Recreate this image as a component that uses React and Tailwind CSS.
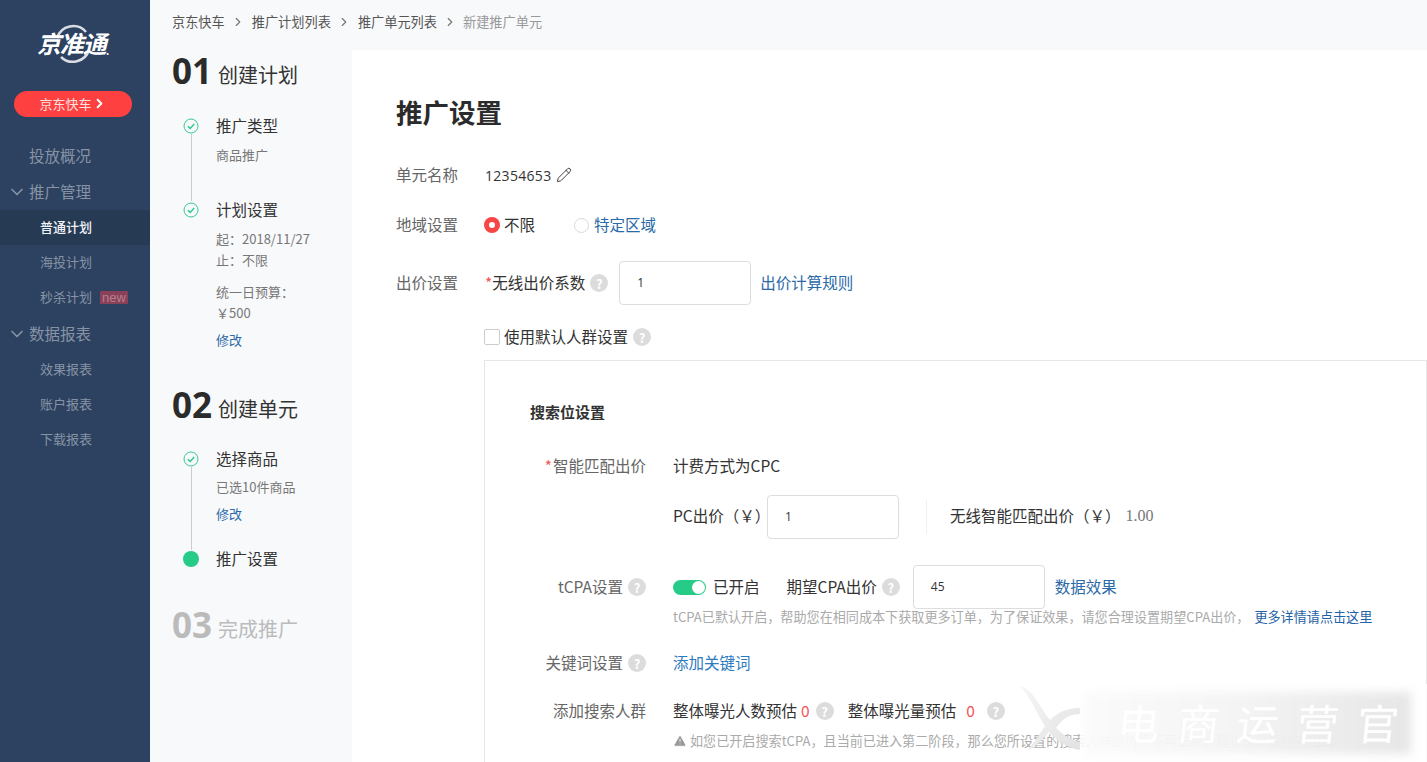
import React from "react";
import { Pencil, ChevronRight, ChevronDown, TriangleAlert } from "lucide-react";

function Help({ className = "" }) {
  return (
    <span className={`inline-flex h-[18px] w-[18px] shrink-0 items-center justify-center rounded-full bg-[#dcdcdc] text-[13px] font-bold leading-none text-white ${className}`}>
      ?
    </span>
  );
}

function CheckDot() {
  return (
    <svg width="16" height="16" viewBox="0 0 16 16" className="shrink-0 bg-[#f8f9fb]">
      <circle cx="8" cy="8" r="7" fill="none" stroke="#3bc892" strokeWidth="1" />
      <path d="M4.8 8.2 7.2 10.4 11.2 6" fill="none" stroke="#2ecb8d" strokeWidth="1.5" />
    </svg>
  );
}

function Step({ title, children, line, h, dot }) {
  return (
    <div className="flex" style={{ height: h }}>
      <div className="flex w-[38px] flex-col items-center pt-[1px]">
        {dot ? <span className="h-4 w-4 rounded-full bg-[#26cb87]" /> : <CheckDot />}
        {line && <span className="w-px flex-1 bg-[#cccccc]" />}
      </div>
      <div className="ml-[6px] -mt-[1px]">
        <div className="text-[15.5px] leading-[18px] text-[#333]">{title}</div>
        {children}
      </div>
    </div>
  );
}

function StepHead({ num, title, muted }) {
  return (
    <div className="flex h-[40px] items-center">
      <span className={`w-[46px] text-[35px] font-bold leading-none [font-family:'Open_Sans',sans-serif] ${muted ? "text-[#bbbbbb]" : "text-[#2b2b2b]"}`}>
        {num}
      </span>
      <span className={`mt-[9px] text-[20px] leading-none ${muted ? "text-[#bbbbbb]" : "text-[#333]"}`}>{title}</span>
    </div>
  );
}

function NavItem({ children, active, badge }) {
  return (
    <div className={`flex h-[35px] items-center pl-[40px] text-[13px] ${active ? "bg-[#263a54] pb-[2px] font-medium text-[#f2f4f7]" : "pb-[1px] text-[#8793a5]"}`}>
      {children}
      {badge && (
        <span className="ml-[8px] flex h-[13px] w-[28px] items-center justify-center rounded-[1px] bg-[#8a4058] text-[13px] leading-none text-[#b5808e] [font-family:'Liberation_Sans',sans-serif]">
          new
        </span>
      )}
    </div>
  );
}

function NavGroup({ children, open, className = "" }) {
  return (
    <div className={`flex h-[36px] items-center text-[15.5px] text-[#8793a5] ${className}`}>
      <span className="flex w-[29px] justify-end pr-[2px]">
        {open && <ChevronDown size={20} strokeWidth={2} className="text-[#8793a5]" />}
      </span>
      {children}
    </div>
  );
}

function Field({ value, className = "" }) {
  return (
    <div className={`flex h-[44px] w-[132px] shrink-0 items-center rounded-[4px] border border-[#dddddd] bg-white pl-[17px] text-[12px] text-[#333] [font-family:'Open_Sans',sans-serif] ${className}`}>
      {value}
    </div>
  );
}

function FormLabel({ children }) {
  return <div className="w-[89px] shrink-0 text-[15.5px] text-[#666]">{children}</div>;
}

function PanelRow({ label, className = "", children }) {
  return (
    <div className={`flex items-center ${className}`}>
      <div className="flex w-[161px] shrink-0 items-center justify-end gap-[1px] text-[15.5px] text-[#666]">{label}</div>
      <div className="ml-[27px] flex items-center text-[15.5px] whitespace-nowrap text-[#333]">{children}</div>
    </div>
  );
}

const watermark = ["电", "商", "运", "营", "官"];

export default function App() {
  return (
    <div className="relative flex h-[762px] w-[1427px] overflow-hidden bg-white [font-family:'Noto_Sans_CJK_SC','Open_Sans',sans-serif]">
      <aside className="w-[150px] shrink-0 bg-[#2c4260]">
        <div className="flex h-[91px] items-start justify-center pt-[24px] pr-[4px]">
          <div className="relative flex h-[38px] w-[76px] items-center justify-center">
            <svg width="40" height="40" viewBox="0 0 40 40" className="absolute left-[18px] top-0">
              <path d="M4 14A17 17 0 0 1 33 8" fill="none" stroke="#d9dde3" strokeWidth="2.5" />
              <path d="M36 26A17 17 0 0 1 8 33" fill="none" stroke="#d9dde3" strokeWidth="2.5" />
            </svg>
            <span className="relative text-[24px] font-bold italic leading-none tracking-[-1px] text-white">京准通</span>
            <span className="relative mt-[15px] text-[10px] font-bold leading-none text-white">.</span>
          </div>
        </div>
        <div className="ml-[14px] flex h-[26px] w-[118px] items-center justify-center rounded-full bg-[#ff4040] pb-[1px] text-[13px] text-[#fde0e0]">
          京东快车
          <ChevronRight size={15} strokeWidth={3} className="text-white" />
        </div>
        <div className="mt-[21px]">
          <NavGroup>投放概况</NavGroup>
          <NavGroup open>推广管理</NavGroup>
          <NavItem active>普通计划</NavItem>
          <NavItem>海投计划</NavItem>
          <NavItem badge>秒杀计划</NavItem>
          <NavGroup open className="mt-[1px]">数据报表</NavGroup>
          <NavItem>效果报表</NavItem>
          <NavItem>账户报表</NavItem>
          <NavItem>下载报表</NavItem>
        </div>
      </aside>

      <div className="flex min-w-0 flex-1 flex-col">
        <nav className="flex h-[50px] shrink-0 items-center bg-[#f8f9fb] pb-[6px] pl-[22px] text-[13.2px] text-[#555]">
          <span>京东快车</span>
          <ChevronRight size={14} className="mx-[6.5px] text-[#777]" />
          <span>推广计划列表</span>
          <ChevronRight size={14} className="mx-[6.5px] text-[#777]" />
          <span>推广单元列表</span>
          <ChevronRight size={14} className="mx-[6px] text-[#777]" />
          <span className="text-[#999]">新建推广单元</span>
        </nav>

        <div className="flex min-h-0 flex-1">
          <div className="w-[202px] shrink-0 bg-[#f8f9fb] pl-[22px]">
            <StepHead num="01" title="创建计划" />
            <div className="mt-[27px]">
              <Step title="推广类型" line h={84}>
                <div className="mt-[11px] text-[13px] text-[#777]">商品推广</div>
              </Step>
              <Step title="计划设置" h={178}>
                <div className="mt-[10px] text-[13px] leading-[21px] text-[#777]">
                  <div>起：2018/11/27</div>
                  <div>止：不限</div>
                  <div className="mt-[11px]">统一日预算：</div>
                  <div>￥500</div>
                  <div className="mt-[6px] text-[#2b6aa8]">修改</div>
                </div>
              </Step>
            </div>
            <div className="mt-[5px]">
              <StepHead num="02" title="创建单元" />
            </div>
            <div className="mt-[26px]">
              <Step title="选择商品" line h={100}>
                <div className="mt-[11px] text-[13px] leading-[18px] text-[#777]">已选10件商品</div>
                <div className="mt-[9px] text-[13px] leading-[18px] text-[#2b6aa8]">修改</div>
              </Step>
              <Step title="推广设置" dot h={32} />
            </div>
            <div className="mt-[22px]">
              <StepHead num="03" title="完成推广" muted />
            </div>
          </div>

          <main className="min-w-0 flex-1 pl-[44px] pt-[43px]">
            <h1 className="text-[26.5px] font-bold leading-[38px] text-[#2b2b2b]">推广设置</h1>

            <div className="mt-[32px] flex h-[24px] items-center">
              <FormLabel>单元名称</FormLabel>
              <span className="text-[14px] tracking-[0.3px] text-[#333] [font-family:'Open_Sans',sans-serif]">12354653</span>
              <Pencil size={16} strokeWidth={1.4} className="ml-[5px] text-[#333]" />
            </div>

            <div className="mt-[26px] flex h-[24px] items-center">
              <FormLabel>地域设置</FormLabel>
              <span className="-ml-[1px] flex h-4 w-4 items-center justify-center rounded-full bg-[#f84646]">
                <span className="h-[6px] w-[6px] rounded-full bg-white" />
              </span>
              <span className="ml-[4px] text-[15.5px] text-[#333]">不限</span>
              <span className="ml-[39px] h-[15px] w-[15px] rounded-full border border-[#d9d9d9]" />
              <span className="ml-[5px] text-[15.5px] text-[#2b6aa8]">特定区域</span>
            </div>

            <div className="mt-[24px] flex h-[44px] items-center">
              <FormLabel>出价设置</FormLabel>
              <span className="text-[15.5px] text-[#333]"><span className="text-[#f25555]">*</span>无线出价系数</span>
              <Help className="ml-[5px]" />
              <Field value="1" className="ml-[11px]" />
              <span className="ml-[9px] text-[15.5px] text-[#2b6aa8]">出价计算规则</span>
            </div>

            <div className="mt-[22px] flex h-[20px] items-center pl-[88px]">
              <span className="h-4 w-4 rounded-[2px] border border-[#cccccc]" />
              <span className="ml-[4px] text-[15.5px] text-[#333]">使用默认人群设置</span>
              <Help className="ml-[5px]" />
            </div>

            <section className="ml-[88px] mt-[13px] h-[500px] border border-[#e6e6e6] pt-[41px]">
              <div className="pl-[45px] text-[15px] font-bold leading-[20px] text-[#333]">搜索位设置</div>

              <PanelRow label={<><span className="text-[#f25555]">*</span>智能匹配出价</>} className="mt-[34px] h-[20px]">
                计费方式为CPC
              </PanelRow>

              <PanelRow className="mt-[19px] h-[44px]">
                <span className="w-[94px] pb-[3px]">PC出价（￥）</span>
                <Field value="1" />
                <span className="ml-[27px] h-[34px] w-px bg-[#f0f0f0]" />
                <span className="ml-[23px] pb-[3px]">无线智能匹配出价（￥）</span>
                <span className="ml-[5px] pb-[2px] text-[16px] text-[#777] [font-family:'Liberation_Serif',serif]">1.00</span>
              </PanelRow>

              <PanelRow label={<>tCPA设置<Help className="ml-[4px]" /></>} className="mt-[26px] h-[44px]">
                <span className="flex h-[15px] w-[33px] items-center justify-end rounded-full bg-[#26cb87] pr-[1px]">
                  <span className="h-[13px] w-[13px] rounded-full bg-white" />
                </span>
                <span className="ml-[7px]">已开启</span>
                <span className="ml-[27px]">期望CPA出价</span>
                <Help className="ml-[5px]" />
                <Field value="45" className="ml-[13px]" />
                <span className="ml-[10px] text-[#2b6aa8]">数据效果</span>
              </PanelRow>

              <div className="mt-[-1px] flex h-[18px] items-center pl-[188px] text-[13.1px] whitespace-nowrap text-[#aaaaaa]">
                tCPA已默认开启，帮助您在相同成本下获取更多订单，为了保证效果，请您合理设置期望CPA出价，
                <span className="ml-[5px] text-[#1f62a5]">更多详情请点击这里</span>
              </div>

              <PanelRow label={<>关键词设置<Help className="ml-[4px]" /></>} className="mt-[27px] h-[20px]">
                <span className="text-[#2b7ac0]">添加关键词</span>
              </PanelRow>

              <PanelRow label="添加搜索人群" className="mt-[28px] h-[20px]">
                整体曝光人数预估
                <span className="ml-[4px] text-[#f25555]">0</span>
                <Help className="ml-[6px]" />
                <span className="ml-[14px]">整体曝光量预估</span>
                <span className="ml-[10px] text-[#f25555]">0</span>
                <Help className="ml-[12px]" />
              </PanelRow>

              <div className="mt-[11px] flex h-[18px] items-center pl-[188px] text-[13.1px] whitespace-nowrap text-[#aaaaaa]">
                <TriangleAlert size={14} fill="#999999" stroke="#ffffff" strokeWidth={1.5} className="mr-[3px] shrink-0" />
                如您已开启搜索tCPA，且当前已进入第二阶段，那么您所设置的搜索人群溢价将不再生效，建议您认真核对出价
              </div>
            </section>
          </main>
        </div>
      </div>

      {/* watermark sits over the bottom right corner of the page */}
      <svg width="60" height="78" viewBox="0 0 60 78" className="pointer-events-none absolute bottom-0 right-[347px] blur-[0.6px]">
        <defs>
          <linearGradient id="fish" x1="0" y1="0" x2="1" y2="1">
            <stop offset="0" stopColor="#f6f6f6" />
            <stop offset="1" stopColor="#e2e2e2" />
          </linearGradient>
        </defs>
        <path d="M0 2C14 6 20 24 30 36 40 26 50 24 60 24L60 30C48 30 42 36 36 44 44 52 52 56 60 58L60 66C46 64 36 56 29 48 22 56 16 62 8 66 14 58 20 50 25 42 17 30 10 12 0 2Z" fill="url(#fish)" />
      </svg>
      <div className="pointer-events-none absolute bottom-0 right-0 h-[78px] w-[347px] bg-white/85">
        <div className="absolute bottom-[8px] left-[4px] right-[16px] top-[8px] bg-gradient-to-r from-[#f8f8f8]/70 via-[#eeeeee]/70 to-[#e0e0e0]/80 blur-[5px]" />
        <div className="absolute inset-0 flex items-center justify-between pb-[2px] pl-[38px] pr-[28px]">
          {watermark.map((c) => (
            <span key={c} className="-skew-x-6 text-[42px] leading-none text-white">
              {c}
            </span>
          ))}
        </div>
      </div>
    </div>
  );
}
